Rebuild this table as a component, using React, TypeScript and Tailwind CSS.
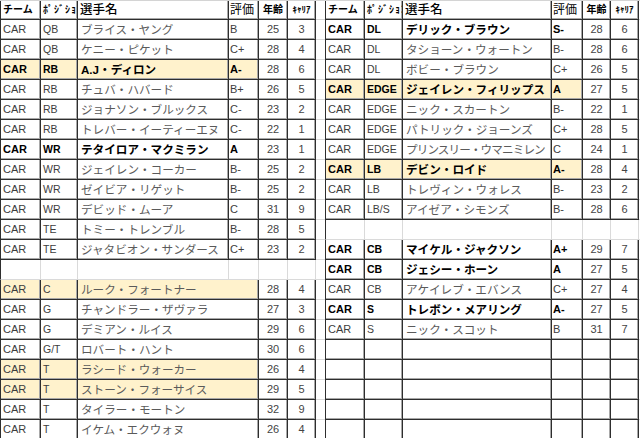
import React from "react";

type Row = {
  pos?: string;
  name?: string;
  grade?: string;
  age?: string;
  car?: string;
  bold?: boolean;
  hl?: boolean;
  tight?: boolean;
  kind: "data" | "blank" | "lower" | "empty";
};

const leftRows: Row[] = [
  { kind: "data", pos: "QB", name: "ブライス・ヤング", grade: "B", age: "25", car: "3" },
  { kind: "data", pos: "QB", name: "ケニー・ピケット", grade: "C+", age: "28", car: "4" },
  { kind: "data", pos: "RB", name: "A.J・ディロン", grade: "A-", age: "28", car: "6", bold: true, hl: true },
  { kind: "data", pos: "RB", name: "チュバ・ハバード", grade: "B+", age: "26", car: "5" },
  { kind: "data", pos: "RB", name: "ジョナソン・ブルックス", grade: "C-", age: "23", car: "2" },
  { kind: "data", pos: "RB", name: "トレバー・イーティーエヌ", grade: "C-", age: "22", car: "1" },
  { kind: "data", pos: "WR", name: "テタイロア・マクミラン", grade: "A", age: "23", car: "1", bold: true },
  { kind: "data", pos: "WR", name: "ジェイレン・コーカー", grade: "B-", age: "25", car: "2" },
  { kind: "data", pos: "WR", name: "ゼイビア・リゲット", grade: "B-", age: "25", car: "2" },
  { kind: "data", pos: "WR", name: "デビッド・ムーア", grade: "C", age: "31", car: "9" },
  { kind: "data", pos: "TE", name: "トミー・トレンブル", grade: "B-", age: "28", car: "5" },
  { kind: "data", pos: "TE", name: "ジャタビオン・サンダース", grade: "C+", age: "23", car: "2" },
  { kind: "blank" },
  { kind: "lower", pos: "C", name: "ルーク・フォートナー", age: "28", car: "4", hl: true },
  { kind: "lower", pos: "G", name: "チャンドラー・ザヴァラ", age: "27", car: "3" },
  { kind: "lower", pos: "G", name: "デミアン・ルイス", age: "29", car: "6" },
  { kind: "lower", pos: "G/T", name: "ロバート・ハント", age: "30", car: "6" },
  { kind: "lower", pos: "T", name: "ラシード・ウォーカー", age: "26", car: "4", hl: true },
  { kind: "lower", pos: "T", name: "ストーン・フォーサイス", age: "29", car: "5", hl: true },
  { kind: "lower", pos: "T", name: "タイラー・モートン", age: "32", car: "9" },
  { kind: "lower", pos: "T", name: "イケム・エクウォヌ", age: "26", car: "4" },
];

const rightRows: Row[] = [
  { kind: "data", pos: "DL", name: "デリック・ブラウン", grade: "S-", age: "28", car: "6", bold: true },
  { kind: "data", pos: "DL", name: "タショーン・ウォートン", grade: "B-", age: "28", car: "6" },
  { kind: "data", pos: "DL", name: "ボビー・ブラウン", grade: "C+", age: "26", car: "5" },
  { kind: "data", pos: "EDGE", name: "ジェイレン・フィリップス", grade: "A", age: "27", car: "5", bold: true, hl: true },
  { kind: "data", pos: "EDGE", name: "ニック・スカートン", grade: "B-", age: "22", car: "1" },
  { kind: "data", pos: "EDGE", name: "パトリック・ジョーンズ", grade: "C+", age: "28", car: "5" },
  { kind: "data", pos: "EDGE", name: "プリンスリー・ウマニミレン", grade: "C", age: "24", car: "1", tight: true },
  { kind: "data", pos: "LB", name: "デビン・ロイド", grade: "A-", age: "28", car: "4", bold: true, hl: true },
  { kind: "data", pos: "LB", name: "トレヴィン・ウォレス", grade: "B-", age: "23", car: "2" },
  { kind: "data", pos: "LB/S", name: "アイゼア・シモンズ", grade: "B-", age: "28", car: "6" },
  { kind: "blank" },
  { kind: "data", pos: "CB", name: "マイケル・ジャクソン", grade: "A+", age: "29", car: "7", bold: true },
  { kind: "data", pos: "CB", name: "ジェシー・ホーン", grade: "A", age: "27", car: "5", bold: true },
  { kind: "data", pos: "CB", name: "アケイレブ・エバンス", grade: "C+", age: "27", car: "4" },
  { kind: "data", pos: "S", name: "トレボン・メアリング", grade: "A-", age: "27", car: "5", bold: true },
  { kind: "data", pos: "S", name: "ニック・スコット", grade: "B", age: "31", car: "7" },
  { kind: "empty" },
  { kind: "empty" },
  { kind: "empty" },
  { kind: "empty" },
  { kind: "empty" },
];

const DARK = "border-b border-r border-[#2e2e2e] shadow-[inset_-1px_-1px_0_#a8a8a8]";
const DARK_B = "border-b border-[#2e2e2e] shadow-[inset_0_-1px_0_#a8a8a8]";
const LIGHT = "border-b border-r border-[#dadada]";

const LEFT_W = ["w-[41px]", "w-[37px]", "w-[151px]", "w-[30px]", "w-[29px]", "w-[28px]"];
const RIGHT_W = ["w-[40px]", "w-[38px]", "w-[149px]", "w-[31px]", "w-[28px]", "w-[28px]"];

function Table({ rows, widths }: { rows: Row[]; widths: string[] }) {
  const [w0, w1, w2, w3, w4, w5] = widths;
  return (
    <div className="flex flex-col shrink-0">
      <div className="flex h-[20px] border-t border-[#d4d4d4] bg-white text-black">
        <div className={`${w0} ${DARK} border-l flex items-center pl-[2px] text-[10px] font-bold overflow-hidden whitespace-nowrap`}>チーム</div>
        <div className={`${w1} ${DARK} flex items-center pl-[2px] text-[10px] font-bold overflow-hidden whitespace-nowrap tracking-[1px]`}>ﾎﾟｼﾞｼｮﾝ</div>
        <div className={`${w2} ${DARK} flex items-center pl-[2px] text-[12.5px] font-medium overflow-hidden whitespace-nowrap`}>選手名</div>
        <div className={`${w3} ${DARK} flex items-center pl-[1px] text-[12px] overflow-hidden whitespace-nowrap`}>評価</div>
        <div className={`${w4} ${DARK} flex items-center justify-center text-[10px] font-bold overflow-hidden whitespace-nowrap`}>年齢</div>
        <div className={`${w5} ${DARK} flex items-center justify-center text-[9px] font-bold overflow-hidden whitespace-nowrap`}>ｷｬﾘｱ</div>
      </div>
      {rows.map((r, i) => {
        if (r.kind === "blank") {
          return (
            <div key={i} className="flex h-[20px] bg-white">
              {widths.map((w, j) => (
                <div key={j} className={`${w} ${LIGHT} ${j === 0 ? "border-l border-l-[#2e2e2e]" : ""}`} />
              ))}
            </div>
          );
        }
        if (r.kind === "empty") {
          return (
            <div key={i} className="flex h-[20px] bg-white">
              {widths.map((w, j) => (
                <div key={j} className={`${w} ${DARK} ${j === 0 ? "border-l" : ""}`} />
              ))}
            </div>
          );
        }
        const hl = r.hl ? "bg-[#fff2cc]" : "bg-white";
        const weight = r.bold ? "font-bold text-black" : "text-[#3d3d3d]";
        const nameColor = r.bold ? "font-bold text-black" : "text-[#5a5a5a]";
        const lower = r.kind === "lower";
        return (
          <div key={i} className="flex h-[20px]">
            <div className={`${w0} ${DARK} ${hl} border-l flex items-center pl-[2px] text-[11px] ${weight}`}>CAR</div>
            <div className={`${w1} ${DARK} ${hl} flex items-center pl-[2px] text-[10.5px] ${weight} whitespace-nowrap overflow-hidden`}>{r.pos}</div>
            <div className={`${w2} ${lower ? DARK_B : DARK} ${hl} flex items-center pl-[3px] text-[11.6px] ${nameColor} ${r.tight ? "tracking-[-0.9px]" : ""} whitespace-nowrap overflow-hidden`}>{r.name}</div>
            <div className={`${w3} ${DARK} ${hl} flex items-center pl-[1px] text-[11px] ${weight}`}>{r.grade}</div>
            <div className={`${w4} ${DARK} bg-white flex items-center justify-center text-[11px] text-[#444]`}>{r.age}</div>
            <div className={`${w5} ${DARK} bg-white flex items-center justify-center text-[11px] text-[#444]`}>{r.car}</div>
          </div>
        );
      })}
    </div>
  );
}

function Gap({ width, count }: { width: string; count: number }) {
  return (
    <div className={`flex flex-col shrink-0 ${width}`}>
      <div className="h-[20px] border-t border-b border-[#d4d4d4]" />
      {Array.from({ length: count }).map((_, i) => (
        <div key={i} className="h-[20px] border-b border-[#dadada]" />
      ))}
    </div>
  );
}

export default function App() {
  return (
    <div className="w-[640px] h-[438px] overflow-hidden bg-white font-['Liberation_Sans','Noto_Sans_CJK_JP',sans-serif] leading-none">
      <div className="flex">
        <Table rows={leftRows} widths={LEFT_W} />
        <Gap width="w-[9px]" count={21} />
        <Table rows={rightRows} widths={RIGHT_W} />
        <Gap width="w-[2px]" count={21} />
      </div>
    </div>
  );
}
